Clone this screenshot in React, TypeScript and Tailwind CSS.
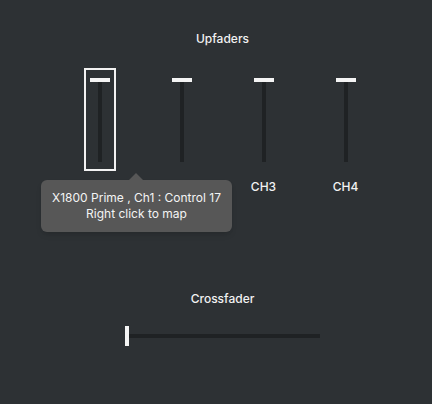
const channels = ["CH1", "CH2", "CH3", "CH4"];

function Fader({ label, selected }: { label: string; selected?: boolean }) {
  return (
    <div className="flex w-[82px] flex-col items-center">
      <div
        className={`flex h-[103px] w-[32px] flex-col items-center border-2 pt-2 ${
          selected ? "border-[#f2f2f2]" : "border-transparent"
        }`}
      >
        <div className="h-[4px] w-[20px] bg-[#f4f4f4]" />
        <div className="h-[80px] w-[4px] bg-[#1f2224]" />
      </div>
      <span className="mt-2 text-xs leading-4 font-medium text-[#f2f2f2]">
        {label}
      </span>
    </div>
  );
}

export default function App() {
  return (
    <div className="relative h-[404px] w-[432px] overflow-hidden bg-[#2d3134] font-['Inter',sans-serif]">
      <div className="flex flex-col items-center pt-[31px] pl-[13px]">
        <h2 className="text-xs leading-4 font-medium text-[#f2f2f2]">
          Upfaders
        </h2>
        <div className="mt-[21px] flex">
          {channels.map((ch, i) => (
            <Fader key={ch} label={ch} selected={i === 0} />
          ))}
        </div>

        <h2 className="mt-[96px] text-xs leading-4 font-medium text-[#f2f2f2]">
          Crossfader
        </h2>
        <div className="mt-[19px] flex w-[195px] items-center">
          <div className="h-[20px] w-[4px] bg-[#f4f4f4]" />
          <div className="h-[4px] flex-1 bg-[#1f2224]" />
        </div>
      </div>

      {/* tooltip */}
      <div className="absolute top-[180px] left-[41px] flex h-[52px] w-[191px] flex-col justify-center rounded-md bg-[#575757] text-center text-xs leading-4 text-[#f4f4f4] shadow-md">
        <div className="absolute -top-[7px] left-[88px] h-0 w-0 border-r-[7px] border-b-[7px] border-l-[7px] border-r-transparent border-b-[#575757] border-l-transparent" />
        <p>X1800 Prime , Ch1 : Control 17</p>
        <p>Right click to map</p>
      </div>
    </div>
  );
}
